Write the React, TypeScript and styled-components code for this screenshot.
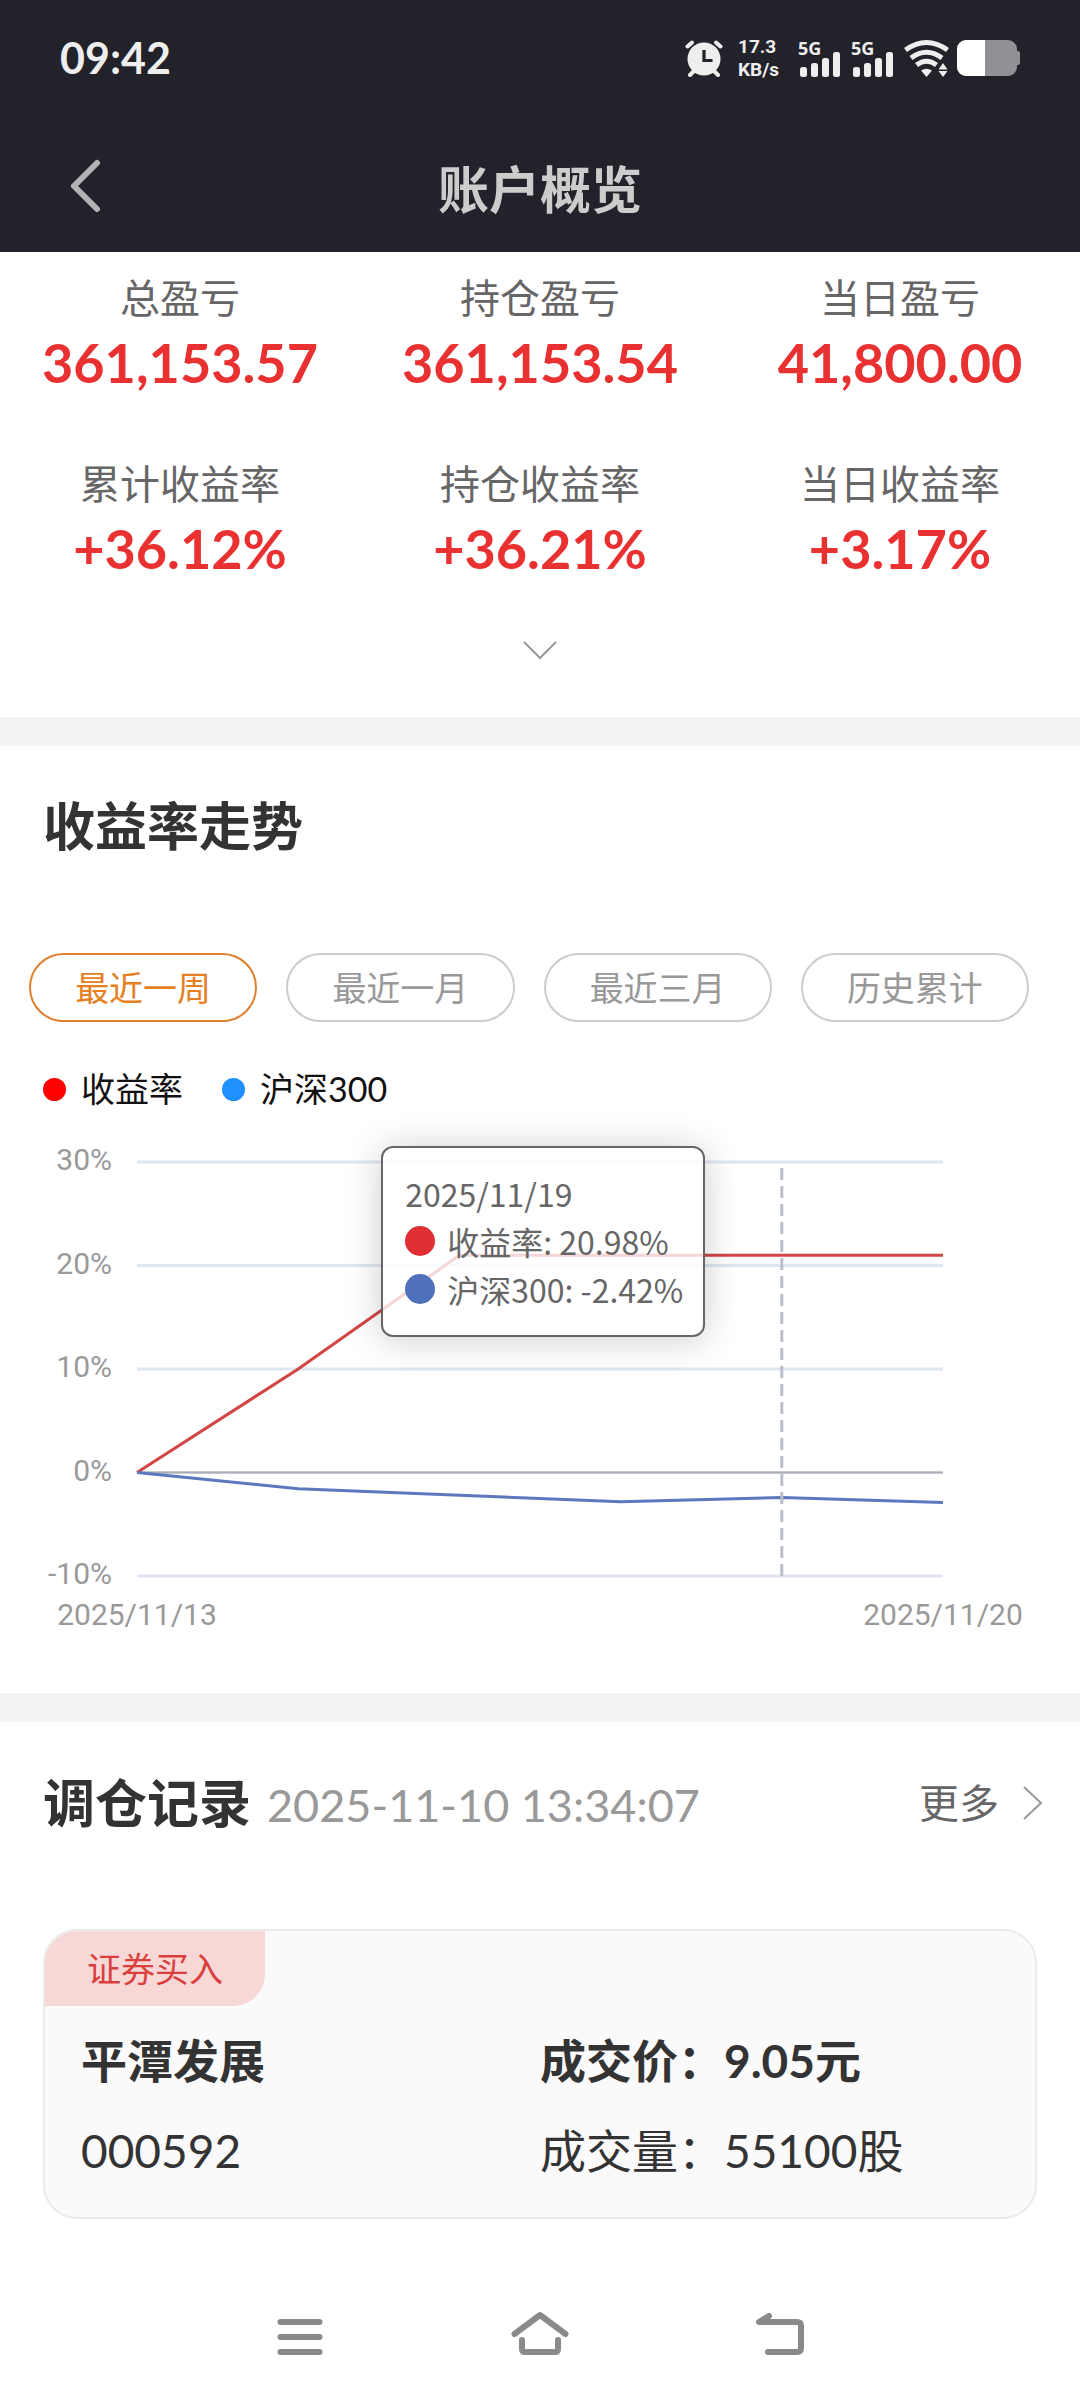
import React from "react";
import styled, { createGlobalStyle } from "styled-components";

const digits = `Lato, "Noto Sans CJK SC", sans-serif`;

const GlobalStyle = createGlobalStyle`
  *, *::before, *::after { box-sizing: border-box; }
  body {
    margin: 0;
    background: #fff;
    color: #333;
    font-family: ${digits};
  }
  button { font: inherit; border: 0; padding: 0; background: none; color: inherit; cursor: pointer; }
  a { color: inherit; text-decoration: none; }
  h1, h2, h3, p, dl, dd, dt, ul { margin: 0; padding: 0; }
  svg { display: block; }
`;

const Page = styled.div`
  display: flex;
  flex-direction: column;
  min-height: 100vh;
`;

const Header = styled.header`
  background: #22222a;
`;

const StatusBar = styled.div`
  display: flex;
  align-items: center;
  justify-content: space-between;
  height: 116px;
  padding: 0 60px;
  color: #eee;
`;

const Clock = styled.time`
  font: 700 43px/64px Lato, sans-serif;
`;

const StatusIcons = styled.div`
  display: flex;
  align-items: center;
  height: 40px;
`;

const NetSpeed = styled.span`
  display: flex;
  flex-direction: column;
  width: 60px;
  padding-left: 15px;
  margin-right: 15px;
  font: 700 19px/23px Roboto, sans-serif;
  white-space: nowrap;
`;

const Signal = styled.span`
  position: relative;
  width: 53px;
  height: 40px;
`;

const SignalLabel = styled.span`
  position: absolute;
  left: 0;
  top: 0;
  font: 700 18px/20px "Noto Sans", sans-serif;
`;

const TitleBar = styled.div`
  display: grid;
  grid-template-columns: 112px 1fr 112px;
  align-items: center;
  height: 136px;
  padding-top: 4px;
`;

const BackButton = styled.button`
  display: flex;
  align-items: center;
  height: 100%;
  padding-left: 68px;
`;

const PageTitle = styled.h1`
  padding-top: 8px;
  text-align: center;
  font-size: 51px;
  line-height: 72px;
  font-weight: 700;
  color: #ccc;
`;

const Summary = styled.section`
  border-bottom: 29px solid #f2f3f5;
`;

const StatGrid = styled.dl`
  display: grid;
  grid-template-columns: repeat(3, 1fr);
  row-gap: 56px;
  padding-top: 16px;
`;

const Stat = styled.div`
  text-align: center;
`;

const StatLabel = styled.dt`
  font-size: 40px;
  line-height: 60px;
  color: #666;
`;

const StatValue = styled.dd`
  font-size: 54px;
  line-height: 70px;
  font-weight: 700;
  color: #ea3132;
`;

const ExpandButton = styled.button`
  display: flex;
  align-items: center;
  justify-content: center;
  width: 100%;
  height: 133px;
`;

const Trend = styled.section`
  border-bottom: 29px solid #f2f3f5;
  padding-top: 42px;
`;

const SectionTitle = styled.h2`
  font-size: 52px;
  line-height: 76px;
  font-weight: 700;
  color: #333;
`;

const TrendHeading = styled.div`
  padding: 0 43px;
`;

const Tabs = styled.div`
  display: grid;
  grid-template-columns: repeat(4, 1fr);
  gap: 29px;
  padding: 89px 51px 0 29px;
`;

const Tab = styled.button<{ $active?: boolean }>`
  && {
    height: 69px;
    border: 2px solid ${(p) => (p.$active ? "#e07f2c" : "#ccc")};
    border-radius: 35px;
    font-size: 34px;
    line-height: 50px;
    color: ${(p) => (p.$active ? "#e67e22" : "#999")};
  }
`;

const Legend = styled.ul`
  display: flex;
  gap: 39px;
  padding: 42px 43px 0;
  list-style: none;
`;

const LegendItem = styled.li`
  display: flex;
  align-items: center;
  gap: 15px;
  font-size: 34px;
  line-height: 50px;
  color: #111;
`;

const Dot = styled.span<{ $color: string; $size: number }>`
  flex: none;
  width: ${(p) => p.$size}px;
  height: ${(p) => p.$size}px;
  border-radius: 50%;
  background: ${(p) => p.$color};
`;

const ChartArea = styled.div`
  position: relative;
`;

const ChartSvg = styled.svg`
  width: 100%;
  height: auto;

  text {
    font: 400 30px Roboto, sans-serif;
    fill: #999;
  }
`;

const Tooltip = styled.div`
  position: absolute;
  left: 35.3%;
  top: 32px;
  padding: 21px 20px 22px 22px;
  border: 2px solid #666;
  border-radius: 12px;
  background: rgba(255, 255, 255, 0.78);
  box-shadow: 0 3px 36px rgba(0, 0, 0, 0.2);
  font: 400 32px/48px "Noto Sans CJK SC", sans-serif;
  color: #666;
  white-space: nowrap;
`;

const TooltipRow = styled.p`
  display: flex;
  align-items: center;
  gap: 12px;
`;

const Records = styled.section`
  padding: 43px 43px 0;
`;

const RecordsHeading = styled.div`
  display: flex;
  align-items: center;
  gap: 16px;
`;

const RecordTime = styled.time`
  flex: 1;
  padding-top: 4px;
  font-size: 45px;
  line-height: 72px;
  color: #999;
`;

const MoreLink = styled.a`
  display: flex;
  align-items: center;
  gap: 24px;
  margin-right: -6px;
  font-size: 40px;
  line-height: 60px;
  color: #666;
`;

const Card = styled.article`
  margin-top: 88px;
  border: 2px solid #ebebeb;
  border-radius: 34px;
  background: #fafafa;
  overflow: hidden;
`;

const Badge = styled.p`
  width: max-content;
  padding: 0 42px;
  border-bottom-right-radius: 32px;
  background: #f8d7d7;
  font-size: 34px;
  line-height: 75px;
  color: #d9403d;
`;

const TradeGrid = styled.div`
  display: grid;
  grid-template-columns: 1fr 1fr;
  row-gap: 22px;
  padding: 21px 36px 32px;
  font-size: 46px;
  line-height: 68px;
`;

const TradeText = styled.p<{ $bold?: boolean }>`
  font-weight: ${(p) => (p.$bold ? 700 : 400)};
`;

const NavBar = styled.nav`
  display: flex;
  justify-content: center;
  gap: 180px;
  margin-top: auto;
  padding-bottom: 33px;
`;

const NavButton = styled.button`
  width: 60px;
  height: 60px;
`;

const WifiSvg = styled.svg`
  margin-right: 7px;
`;

const stats = [
  ["总盈亏", "361,153.57"],
  ["持仓盈亏", "361,153.54"],
  ["当日盈亏", "41,800.00"],
  ["累计收益率", "+36.12%"],
  ["持仓收益率", "+36.21%"],
  ["当日收益率", "+3.17%"],
];

const ranges = ["最近一周", "最近一月", "最近三月", "历史累计"];

const portfolio = [0, 10, 20.98, 20.98, 20.98, 20.98];
const index300 = [0, -1.57, -2.2, -2.83, -2.42, -2.9];

const chart = { left: 137, right: 943, top: 48, step: 103.5, height: 579 };
const xAt = (i: number) => chart.left + ((chart.right - chart.left) * i) / 5;
const yAt = (v: number) => chart.top + ((30 - v) / 10) * chart.step;
const linePath = (values: number[]) =>
  values.map((v, i) => `${i ? "L" : "M"}${xAt(i)} ${yAt(v)}`).join(" ");

function AlarmIcon() {
  return (
    <svg width="38" height="38" viewBox="0 0 38 38" fill="none" aria-hidden="true">
      <circle cx="19" cy="20" r="16.5" fill="#eee" />
      <path d="M2.500 7.500 7 3.500M35.500 7.500 31 3.500M5 36l4-4M33 36l-4-4" stroke="#eee" strokeWidth="4" strokeLinecap="round" />
      <path d="M19 11v10.500h8.500" stroke="#22222a" strokeWidth="3.200" />
    </svg>
  );
}

function SignalBars() {
  return (
    <svg width="53" height="40" viewBox="0 0 53 40" fill="#eee" aria-hidden="true">
      <rect x="2" y="29" width="7" height="10" rx="2.500" />
      <rect x="13" y="25" width="7" height="14" rx="2.500" />
      <rect x="24" y="20" width="7" height="19" rx="2.500" />
      <rect x="35" y="14" width="7" height="25" rx="2.500" />
    </svg>
  );
}

function WifiIcon() {
  return (
    <WifiSvg width="46" height="38" viewBox="0 0 46 38" aria-hidden="true">
      <g fill="none" stroke="#eee" strokeWidth="5">
        <path d="M1.500 11Q22.500-4 43.500 11" />
        <path d="M7 19Q22.500 7.500 38 19" />
        <path d="M12.500 26Q22.500 18.500 32.500 26" />
      </g>
      <path d="M17 31.500q5.500-3.500 11 0L22.500 38zM34.500 30.500l4.500-6.500 4.500 6.500zM34.500 32l4.500 6 4.500-6z" fill="#eee" />
    </WifiSvg>
  );
}

function BatteryIcon() {
  return (
    <svg width="63" height="36" viewBox="0 0 63 36" aria-hidden="true">
      <rect width="60" height="36" rx="9" fill="#919195" />
      <rect x="58" y="11" width="5" height="14" rx="2" fill="#919195" />
      <path d="M28 0H9a9 9 0 0 0-9 9v18a9 9 0 0 0 9 9h19z" fill="#fff" />
    </svg>
  );
}

function ReturnChart() {
  return (
    <ChartSvg viewBox={`0 0 1080 ${chart.height}`} role="img" aria-label="收益率走势">
      {[30, 20, 10, 0, -10].map((v) => (
        <g key={v}>
          <text x="112" y={yAt(v) + 8} textAnchor="end">{v}%</text>
          <line x1={chart.left} x2={chart.right} y1={yAt(v)} y2={yAt(v)} stroke="#e0e6f1" strokeWidth="3" />
        </g>
      ))}
      <line x1={chart.left} x2={chart.right} y1={yAt(0)} y2={yAt(0)} stroke="#aaadb4" strokeWidth="2" />
      <g fill="none" strokeWidth="3">
        <path d={linePath(portfolio)} stroke="#d34545" />
        <path d={linePath(index300)} stroke="#5b78bd" />
      </g>
      <line x1={xAt(4)} x2={xAt(4)} y1={yAt(-10)} y2={yAt(30)} stroke="#b9bec9" strokeWidth="3" strokeDasharray="12 6" />
      <text x={chart.left} y={yAt(-10) + 49} textAnchor="middle">2025/11/13</text>
      <text x={chart.right} y={yAt(-10) + 49} textAnchor="middle">2025/11/20</text>
    </ChartSvg>
  );
}

export default function App() {
  return (
    <Page>
      <GlobalStyle />
      <Header>
        <StatusBar>
          <Clock>09:42</Clock>
          <StatusIcons>
            <AlarmIcon />
            <NetSpeed>
              <span>17.3</span>
              <span>KB/s</span>
            </NetSpeed>
            {[1, 2].map((sim) => (
              <Signal key={sim}>
                <SignalLabel>5G</SignalLabel>
                <SignalBars />
              </Signal>
            ))}
            <WifiIcon />
            <BatteryIcon />
          </StatusIcons>
        </StatusBar>
        <TitleBar>
          <BackButton aria-label="返回">
            <svg width="34" height="56" viewBox="0 0 34 56" fill="none" stroke="#b3b3b3" strokeWidth="6" strokeLinecap="round" strokeLinejoin="round">
              <path d="M29 5 6 28l23 23" />
            </svg>
          </BackButton>
          <PageTitle>账户概览</PageTitle>
        </TitleBar>
      </Header>

      <Summary>
        <StatGrid>
          {stats.map(([label, value]) => (
            <Stat key={label}>
              <StatLabel>{label}</StatLabel>
              <StatValue>{value}</StatValue>
            </Stat>
          ))}
        </StatGrid>
        <ExpandButton aria-label="展开">
          <svg width="34" height="20" viewBox="0 0 34 20" fill="none" stroke="#999" strokeWidth="2">
            <path d="M1 1l16 16L33 1" />
          </svg>
        </ExpandButton>
      </Summary>

      <Trend>
        <TrendHeading>
          <SectionTitle>收益率走势</SectionTitle>
        </TrendHeading>
        <Tabs>
          {ranges.map((name, i) => (
            <Tab key={name} $active={i === 0} aria-pressed={i === 0}>{name}</Tab>
          ))}
        </Tabs>
        <Legend>
          <LegendItem><Dot $color="#ff0000" $size={23} />收益率</LegendItem>
          <LegendItem><Dot $color="#1e90ff" $size={23} />沪深300</LegendItem>
        </Legend>
        <ChartArea>
          <ReturnChart />
          <Tooltip>
            <p>2025/11/19</p>
            <TooltipRow><Dot $color="#e03033" $size={30} />收益率: 20.98%</TooltipRow>
            <TooltipRow><Dot $color="#4f71bb" $size={30} />沪深300: -2.42%</TooltipRow>
          </Tooltip>
        </ChartArea>
      </Trend>

      <Records>
        <RecordsHeading>
          <SectionTitle>调仓记录</SectionTitle>
          <RecordTime>2025-11-10 13:34:07</RecordTime>
          <MoreLink href="#records">
            更多
            <svg width="20" height="34" viewBox="0 0 20 34" fill="none" stroke="#999" strokeWidth="2">
              <path d="M1 1l17 16L1 33" />
            </svg>
          </MoreLink>
        </RecordsHeading>
        <Card>
          <Badge>证券买入</Badge>
          <TradeGrid>
            <TradeText $bold>平潭发展</TradeText>
            <TradeText $bold>成交价：9.05元</TradeText>
            <TradeText>000592</TradeText>
            <TradeText>成交量：55100股</TradeText>
          </TradeGrid>
        </Card>
      </Records>

      <NavBar>
        <NavButton aria-label="最近任务">
          <svg width="60" height="60" viewBox="0 0 60 60" fill="none" stroke="#8a8a8a" strokeWidth="6" strokeLinecap="round">
            <path d="M10.500 15h39M10.500 30h39M10.500 45h39" />
          </svg>
        </NavButton>
        <NavButton aria-label="主屏幕">
          <svg width="60" height="60" viewBox="0 0 60 60" fill="none" stroke="#8a8a8a" strokeWidth="6" strokeLinecap="round" strokeLinejoin="round">
            <path d="M4.500 27 30 8l25.500 19M12 33v9q0 3 3 3h30q3 0 3-3v-9" />
          </svg>
        </NavButton>
        <NavButton aria-label="返回上一页">
          <svg width="60" height="60" viewBox="0 0 60 60" fill="none" stroke="#8a8a8a" strokeWidth="6" strokeLinecap="round" strokeLinejoin="round">
            <path d="M19 9 9 15h38q4 0 4 4v22q0 4-4 4H18" />
          </svg>
        </NavButton>
      </NavBar>
    </Page>
  );
}
